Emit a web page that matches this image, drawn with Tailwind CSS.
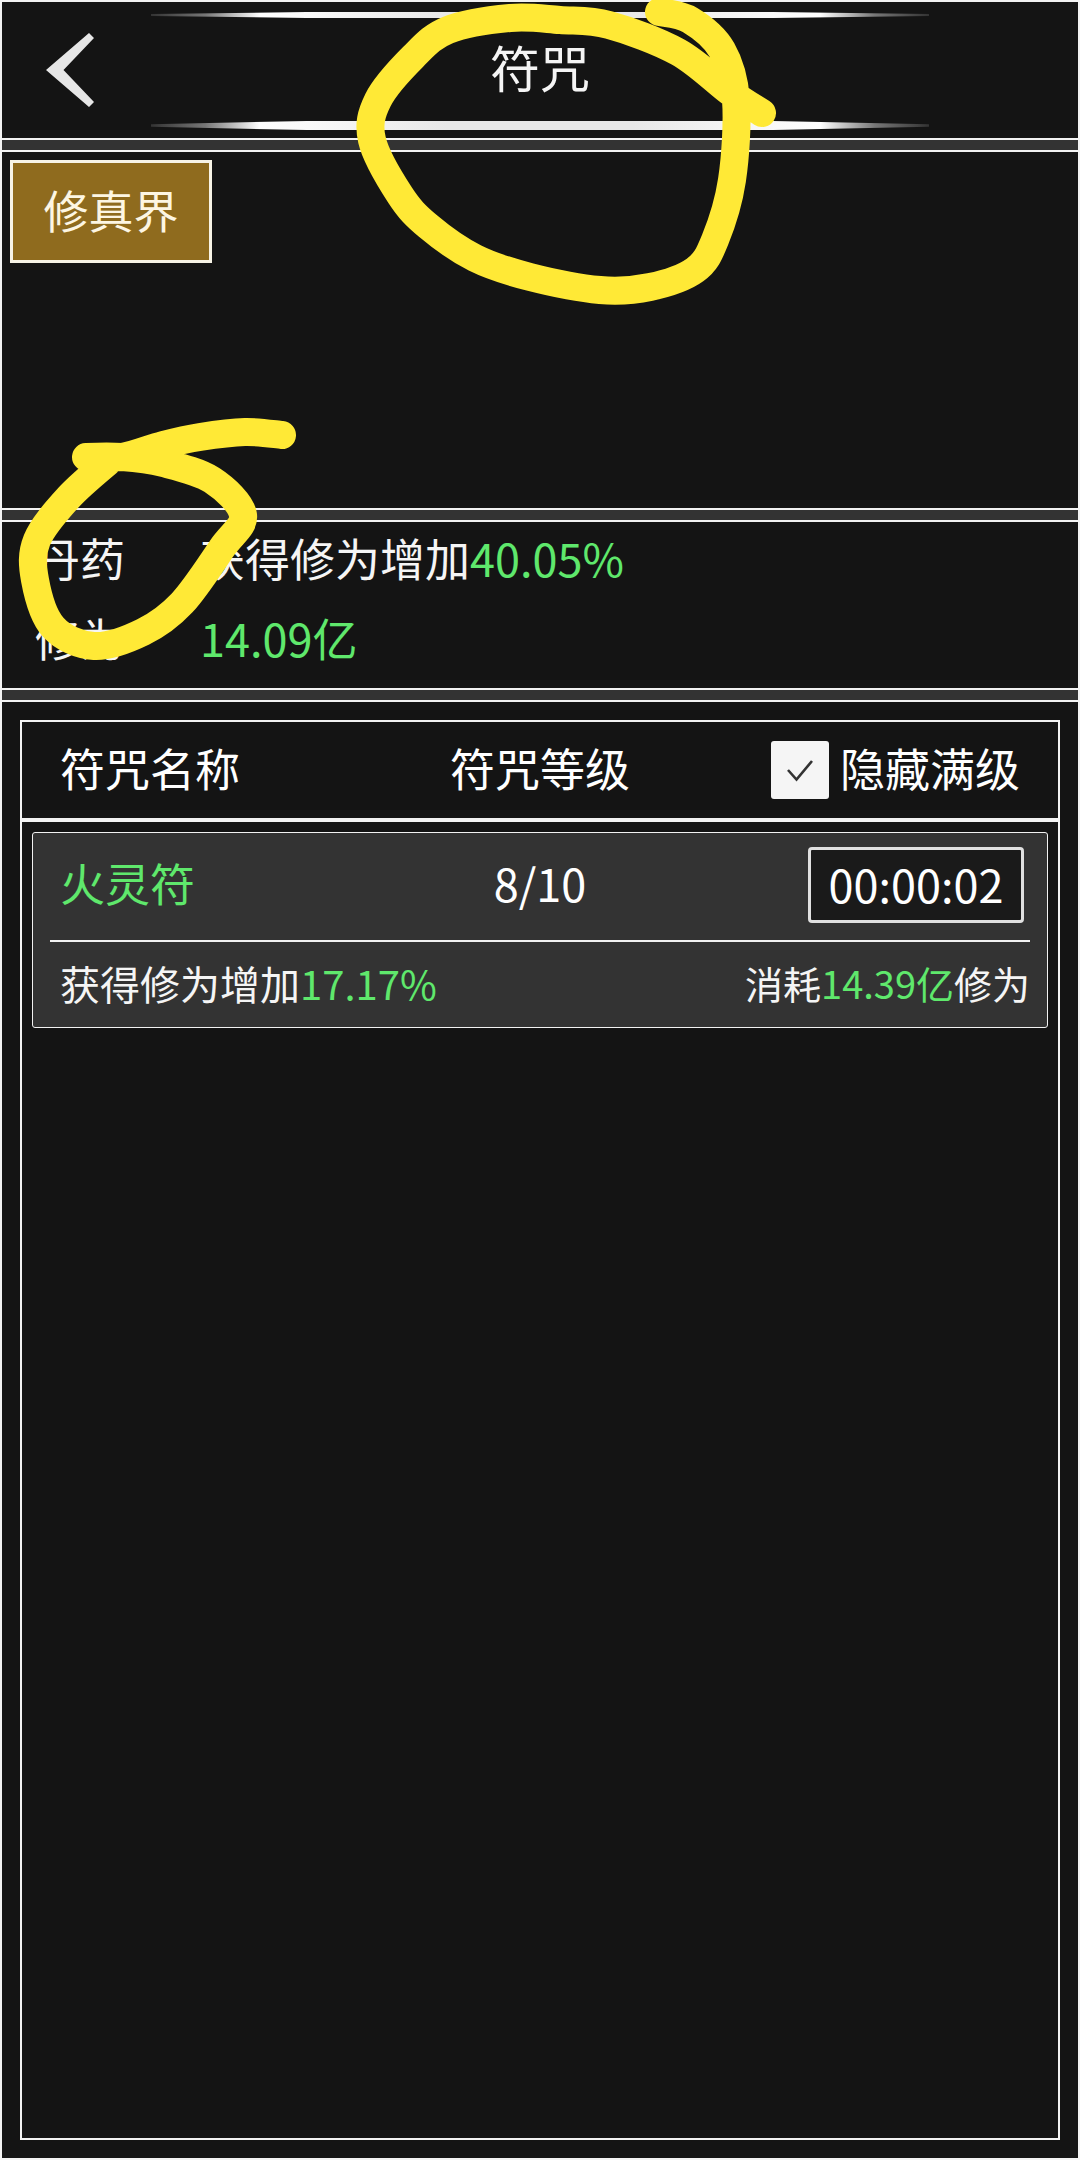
<!DOCTYPE html>
<html lang="zh-CN">
<head>
  <meta charset="UTF-8" />
  <title>符咒</title>
  <script src="https://cdn.jsdelivr.net/npm/@tailwindcss/browser@4"></script>
</head>
<body class="bg-[#141414]">
<div class="relative w-[1080px] h-[2160px] flex flex-col border-2 border-[#f2f2f2] bg-[#141414] text-white text-[45px] leading-none font-['Noto_Sans_CJK_SC','Noto_Sans',sans-serif]">

  <!-- header -->
  <div class="h-[136px] shrink-0 grid grid-cols-[149px_778px_1fr]">
    <div class="flex items-center">
      <svg class="ml-[42px] w-[50px] h-[74px]" viewBox="44 33 50 74"><polygon points="89,33 94,38 63.5,70 94,102 89,107 46,70" fill="#e6e6e6"/></svg>
    </div>
    <div class="flex flex-col items-center justify-between pt-[10px] pb-[8px]">
      <div class="w-full h-[6px] [clip-path:polygon(0_35%,20%_0,80%_0,100%_35%,100%_65%,80%_100%,20%_100%,0_65%)] bg-[linear-gradient(to_right,#333_0%,#777_7%,#fff_14%,#e8e8e8_38%,#e8e8e8_62%,#fff_86%,#777_93%,#333_100%)]"></div>
      <div class="text-[50px] text-[#f5f5f5] pb-[7px]">符咒</div>
      <div class="w-full h-[9px] [clip-path:polygon(0_35%,20%_0,80%_0,100%_35%,100%_65%,80%_100%,20%_100%,0_65%)] bg-[linear-gradient(to_right,#333_0%,#777_7%,#fff_14%,#e8e8e8_38%,#e8e8e8_62%,#fff_86%,#777_93%,#333_100%)]"></div>
    </div>
  </div>
  <div class="h-[14px] shrink-0 bg-[#333] border-y-2 border-[#f2f2f2]"></div>

  <!-- realm tabs -->
  <div class="h-[356px] shrink-0 pt-[8px] pl-[8px]">
    <div class="w-[202px] h-[103px] flex items-center justify-center bg-[#8f6b1e] border-[3px] border-[#f7f3e6] text-[#fdf6e3] pb-[5px]">修真界</div>
  </div>
  <div class="h-[14px] shrink-0 bg-[#333] border-y-2 border-[#f2f2f2]"></div>

  <!-- stats -->
  <div class="h-[166px] shrink-0 grid grid-cols-[198px_1fr] grid-rows-[70px_70px] gap-y-[10px] items-center text-[#f5f5f5]">
    <div class="pl-[33px]">丹药</div>
    <div>获得修为增加<span class="text-[#5fe86c]">40.05%</span></div>
    <div class="pl-[33px]">修为</div>
    <div class="text-[#5fe86c]">14.09亿</div>
  </div>
  <div class="h-[14px] shrink-0 bg-[#333] border-y-2 border-[#f2f2f2]"></div>

  <!-- talisman list -->
  <div class="flex-1 pt-[18px] pb-[18px] px-[18px] flex">
    <div class="flex-1 border-2 border-[#f2f2f2] flex flex-col">
      <div class="h-[100px] shrink-0 border-b-4 border-[#f2f2f2] grid grid-cols-[1fr_auto_1fr] items-center px-[38px]">
        <div class="pb-[5px]">符咒名称</div>
        <div class="pb-[5px]">符咒等级</div>
        <div class="flex items-center justify-end gap-[11px]">
          <div class="w-[58px] h-[58px] rounded-[3px] bg-[#f5f5f5] flex items-center justify-center">
            <svg class="w-[30px] h-[30px]" viewBox="0 0 30 30"><path d="M3 15 L11.5 24.5 L27 6" fill="none" stroke="#333" stroke-width="2.6"/></svg>
          </div>
          <div class="pb-[5px]">隐藏满级</div>
        </div>
      </div>
      <div class="mt-[10px] mx-[10px] border border-[#f2f2f2] rounded-[3px] bg-[#333] h-[196px] flex flex-col">
        <div class="h-[104px] mb-[3px] shrink-0 grid grid-cols-[1fr_auto_1fr] items-center px-[23px]">
          <div class="text-[#5fe86c] pl-[4px] pb-[5px]">火灵符</div>
          <div class="pb-[5px]">8/10</div>
          <div class="justify-self-end w-[216px] h-[76px] flex items-center justify-center rounded-[4px] border-[3px] border-[#e0e0e0] bg-[#1a1a1a] pb-[4px]">00:00:02</div>
        </div>
        <div class="h-[2px] mx-[17px] shrink-0 bg-[#f2f2f2]"></div>
        <div class="flex-1 flex items-center justify-between pl-[27px] pr-[17px] pb-[3px] text-[#f5f5f5]">
          <div class="text-[40px]">获得修为增加<span class="text-[#5fe86c]">17.17%</span></div>
          <div class="text-[38px]">消耗<span class="text-[#5fe86c]">14.39亿</span>修为</div>
        </div>
      </div>
    </div>
  </div>

  <!-- hand-drawn marks on top of the screenshot -->
  <svg class="absolute left-[-2px] top-[-2px] w-[1080px] h-[2160px] pointer-events-none" viewBox="0 0 1080 2160" fill="none" stroke="#ffe936" stroke-width="28" stroke-linecap="round" stroke-linejoin="round">
    <path id="mark1"/>
    <path id="mark2"/>
  </svg>
</div>

<script>
  const mark1 = [[659,12],[690,20],[722,50],[736,100],[732,180],[715,240],[695,270],[650,287],[600,290],[530,277],[475,258],[428,226],[400,195],[372,140],[378,100],[413,57],[448,30],[510,18],[560,20],[609,25],[678,52],[730,92],[762,113]];
  const mark2 = [[282,435],[245,432],[200,437],[163,445],[122,457],[86,457],[122,457],[163,463],[212,480],[243,515],[222,548],[182,603],[143,632],[94,646],[53,627],[35,580],[37,540],[69,497],[110,460]];

  function smooth(p) {
    let d = "M" + p[0][0] + " " + p[0][1];
    for (let i = 0; i < p.length - 1; i++) {
      const a = p[i - 1] || p[i], b = p[i], c = p[i + 1], e = p[i + 2] || c;
      d += " C" + (b[0] + (c[0] - a[0]) / 6) + " " + (b[1] + (c[1] - a[1]) / 6) + " " +
        (c[0] - (e[0] - b[0]) / 6) + " " + (c[1] - (e[1] - b[1]) / 6) + " " + c[0] + " " + c[1];
    }
    return d;
  }

  document.getElementById("mark1").setAttribute("d", smooth(mark1));
  document.getElementById("mark2").setAttribute("d", smooth(mark2));
</script>
</body>
</html>
